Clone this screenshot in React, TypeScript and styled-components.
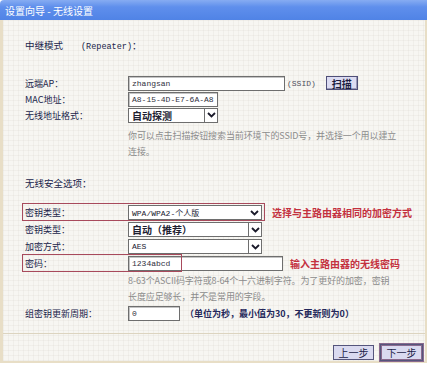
import styled, { createGlobalStyle } from 'styled-components'

const GlobalStyle = createGlobalStyle`
    html, body {
        margin: 0;
        padding: 0;
        background: #ffffff;
    }
    body {
        font-family: "Noto Sans CJK SC", "Liberation Sans", sans-serif;
        font-size: 9px;
        color: #20244a;
    }
`

const Window = styled.div`
    width: 427px;
    height: 363px;
    display: flex;
    flex-direction: column;
`

const TitleBar = styled.div`
    height: 20px;
    flex: none;
    display: flex;
    align-items: center;
    padding-left: 5px;
    border-top-left-radius: 4px;
    background: linear-gradient(to bottom, #86acf2 0%, #5f8fec 35%, #5083e6 100%);
    color: #ffffff;
    font-size: 10px;
    white-space: pre;
`

const Body = styled.div`
    flex: 1;
    display: flex;
    flex-direction: column;
    border-left: 3px solid #e8dec6;
    border-right: 2px solid #e8dec6;
    border-bottom: 2px solid #e8dec6;
    background-color: #f7f6f2;
    background-image:
        linear-gradient(rgba(220, 218, 210, 0.25) 1px, transparent 1px),
        linear-gradient(90deg, rgba(220, 218, 210, 0.25) 1px, transparent 1px);
    background-size: 5px 5px;
`

const Content = styled.div`
    padding: 16px 0 0 22px;
`

const Row = styled.div<{ $mt?: number; $h?: number }>`
    position: relative;
    display: flex;
    align-items: center;
    height: ${p => p.$h ?? 17}px;
    margin-top: ${p => p.$mt ?? 0}px;
`

const Label = styled.div`
    width: 103px;
    flex: none;
    white-space: nowrap;
`

const Heading = styled.div`
    white-space: nowrap;
    font-size: 9.5px;
`

const Mono = styled.span`
    font-family: "Liberation Mono", "Noto Sans CJK SC", monospace;
    font-size: 8.5px;
    margin-left: 18px;
`

const Field = styled.div<{ $w: number }>`
    width: ${p => p.$w}px;
    height: 15px;
    box-sizing: border-box;
    display: flex;
    align-items: center;
    padding-left: 3px;
    background: #ffffff;
    border: 1px solid #6e6e6e;
    box-shadow: inset 1px 1px 0 #c4c4c4;
    font-family: "Liberation Mono", "Noto Sans CJK SC", monospace;
    font-size: 8px;
    color: #303040;
    white-space: nowrap;
    overflow: hidden;
`

const Select = styled.div<{ $w: number }>`
    width: ${p => p.$w}px;
    height: 15px;
    box-sizing: border-box;
    display: flex;
    align-items: center;
    background: #ffffff;
    border: 1px solid #6e6e6e;
    white-space: nowrap;
`

const SelectText = styled.span<{ $bold?: boolean }>`
    flex: 1;
    padding-left: 3px;
    font-family: ${p => (p.$bold ? '"Noto Sans CJK SC", sans-serif' : '"Liberation Mono", "Noto Sans CJK SC", monospace')};
    font-size: ${p => (p.$bold ? 10 : 8)}px;
    font-weight: ${p => (p.$bold ? 700 : 400)};
    color: #202030;
    overflow: hidden;
`

const ArrowBox = styled.span<{ $boxed?: boolean }>`
    width: 13px;
    height: 13px;
    flex: none;
    display: flex;
    align-items: center;
    justify-content: center;
    box-sizing: border-box;
    border-left: ${p => (p.$boxed ? '1px solid #6e6e6e' : 'none')};
    background: #ffffff;
`

const Hint = styled.div<{ $mt?: number }>`
    margin: ${p => p.$mt ?? 0}px 0 0 103px;
    width: 270px;
    line-height: 16px;
    color: #8c8c8c;
    font-size: 9px;
    letter-spacing: -0.1px;
`

const Note = styled.span<{ $ml: number }>`
    margin-left: ${p => p.$ml}px;
    color: #c4313f;
    font-size: 10px;
    font-weight: 700;
    white-space: nowrap;
`

const Unit = styled.span`
    margin-left: 5px;
    color: #23275a;
    font-size: 9px;
    font-weight: 700;
    white-space: nowrap;
`

const Ssid = styled.span`
    margin-left: 2px;
    font-family: "Liberation Mono", monospace;
    font-size: 8px;
    color: #505060;
`

const ScanButton = styled.button`
    margin-left: 10px;
    width: 32px;
    height: 14px;
    padding: 0;
    display: flex;
    align-items: center;
    justify-content: center;
    background: #dcdcf2;
    border: 1px solid #4f4f78;
    box-shadow: inset -1px -1px 0 #9a9ab8;
    font-family: "Noto Sans CJK SC", sans-serif;
    font-size: 10px;
    font-weight: 700;
    color: #1c1c40;
`

const Highlight = styled.span<{ $w: number }>`
    position: absolute;
    left: -3px;
    top: -1px;
    width: ${p => p.$w}px;
    height: 18px;
    box-sizing: border-box;
    border: 1px solid #a84a5c;
    pointer-events: none;
`

const Footer = styled.div`
    margin-top: 11px;
    flex: 1;
    display: flex;
    justify-content: flex-end;
    align-items: flex-start;
    gap: 6px;
    padding: 10px 2px 0 0;
    border-top: 1px solid #dcd4c0;
`

const NavButton = styled.button<{ $focus?: boolean }>`
    width: ${p => (p.$focus ? 43 : 41)}px;
    height: ${p => (p.$focus ? 17 : 15)}px;
    margin-top: ${p => (p.$focus ? 0 : 1)}px;
    padding: 0;
    display: flex;
    align-items: center;
    justify-content: center;
    background: #dadaf0;
    border: 1px solid #55557c;
    outline: ${p => (p.$focus ? '1px solid #8a6a8e' : 'none')};
    outline-offset: 0;
    box-shadow: ${p => (p.$focus ? 'inset 0 0 0 1px #8a6a8e' : 'none')};
    font-family: "Noto Sans CJK SC", sans-serif;
    font-size: 10px;
    color: #1c1c48;
`

function Chevron() {
    return (
        <svg width="9" height="6" viewBox="0 0 9 6">
            <path d="M1 1 L4.5 4.5 L8 1" fill="none" stroke="#1a1a2a" strokeWidth="1.8" />
        </svg>
    )
}

type dropProps = {
    width: number
    text: string
    bold?: boolean
    boxed?: boolean
}

function Drop({ width, text, bold, boxed = true }: dropProps) {
    return (
        <Select $w={width}>
            <SelectText $bold={bold}>{text}</SelectText>
            <ArrowBox $boxed={boxed}>
                <Chevron />
            </ArrowBox>
        </Select>
    )
}

export default function App() {
    return (
        <>
            <GlobalStyle />
            <Window>
                <TitleBar>设置向导 - 无线设置</TitleBar>
                <Body>
                    <Content>
                        <Row $h={18}>
                            <Heading>
                                中继模式<Mono>(Repeater)</Mono>：
                            </Heading>
                        </Row>

                        <Row $mt={21} $h={16}>
                            <Label>远端AP：</Label>
                            <Field $w={157}>zhangsan</Field>
                            <Ssid>(SSID)</Ssid>
                            <ScanButton>扫描</ScanButton>
                        </Row>
                        <Row $h={16}>
                            <Label>MAC地址：</Label>
                            <Field $w={90}>A8-15-4D-E7-6A-A8</Field>
                        </Row>
                        <Row $h={16}>
                            <Label>无线地址格式：</Label>
                            <Drop width={90} text="自动探测" bold />
                        </Row>
                        <Hint $mt={5}>
                            你可以点击扫描按钮搜索当前环境下的SSID号，并选择一个用以建立连接。
                        </Hint>

                        <Row $mt={14}>
                            <Heading>无线安全选项：</Heading>
                        </Row>

                        <Row $mt={13}>
                            <Label>密钥类型：</Label>
                            <Drop width={134} text="WPA/WPA2-个人版" boxed={false} />
                            <Note $ml={10}>选择与主路由器相同的加密方式</Note>
                            <Highlight $w={243} />
                        </Row>
                        <Row>
                            <Label>密钥类型：</Label>
                            <Drop width={134} text="自动（推荐）" bold />
                        </Row>
                        <Row>
                            <Label>加密方式：</Label>
                            <Drop width={134} text="AES" />
                        </Row>
                        <Row>
                            <Label>密码：</Label>
                            <Field $w={155}>1234abcd</Field>
                            <Note $ml={7}>输入主路由器的无线密码</Note>
                            <Highlight $w={160} />
                        </Row>
                        <Hint $mt={1}>
                            8-63个ASCII码字符或8-64个十六进制字符。为了更好的加密，密钥长度应足够长，并不是常用的字段。
                        </Hint>

                        <Row>
                            <Label>组密钥更新周期：</Label>
                            <Field $w={52}>0</Field>
                            <Unit>（单位为秒，最小值为30，不更新则为0）</Unit>
                        </Row>
                    </Content>
                    <Footer>
                        <NavButton>上一步</NavButton>
                        <NavButton $focus>下一步</NavButton>
                    </Footer>
                </Body>
            </Window>
        </>
    )
}
